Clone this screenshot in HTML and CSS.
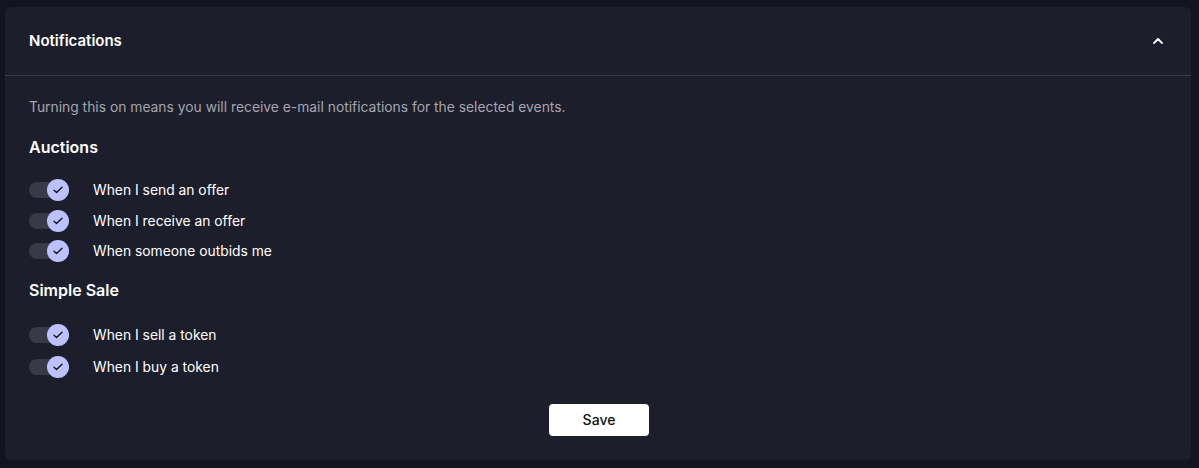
FILE: index.html
```html
<!DOCTYPE html>
<html>
<head>
<meta charset="utf-8">
<link rel="stylesheet" href="styles.css">
</head>
<body>
<section class="card">
  <header class="card-header">
    <h2 class="title">Notifications</h2>
    <svg class="chevron" width="12" height="8" viewBox="0 0 12 8"><path d="M2 6 L6 2 L10 6" fill="none" stroke="#fff" stroke-width="1.8" stroke-linecap="round" stroke-linejoin="round"/></svg>
  </header>
  <div class="card-body">
    <p class="desc">Turning this on means you will receive e-mail notifications for the selected events.</p>
    <h3 class="group-title">Auctions</h3>
    <ul class="list list-auctions">
      <li class="row"><span class="toggle"><span class="thumb"><svg width="12" height="10" viewBox="0 0 12 10"><path d="M2 5.2 L4.6 7.6 L10 2.2" fill="none" stroke="#15161f" stroke-width="1.4" stroke-linecap="round" stroke-linejoin="round"/></svg></span></span><span class="label">When I send an offer</span></li>
      <li class="row"><span class="toggle"><span class="thumb"><svg width="12" height="10" viewBox="0 0 12 10"><path d="M2 5.2 L4.6 7.6 L10 2.2" fill="none" stroke="#15161f" stroke-width="1.4" stroke-linecap="round" stroke-linejoin="round"/></svg></span></span><span class="label">When I receive an offer</span></li>
      <li class="row"><span class="toggle"><span class="thumb"><svg width="12" height="10" viewBox="0 0 12 10"><path d="M2 5.2 L4.6 7.6 L10 2.2" fill="none" stroke="#15161f" stroke-width="1.4" stroke-linecap="round" stroke-linejoin="round"/></svg></span></span><span class="label">When someone outbids me</span></li>
    </ul>
    <h3 class="group-title">Simple Sale</h3>
    <ul class="list list-sale">
      <li class="row"><span class="toggle"><span class="thumb"><svg width="12" height="10" viewBox="0 0 12 10"><path d="M2 5.2 L4.6 7.6 L10 2.2" fill="none" stroke="#15161f" stroke-width="1.4" stroke-linecap="round" stroke-linejoin="round"/></svg></span></span><span class="label">When I sell a token</span></li>
      <li class="row"><span class="toggle"><span class="thumb"><svg width="12" height="10" viewBox="0 0 12 10"><path d="M2 5.2 L4.6 7.6 L10 2.2" fill="none" stroke="#15161f" stroke-width="1.4" stroke-linecap="round" stroke-linejoin="round"/></svg></span></span><span class="label">When I buy a token</span></li>
    </ul>
    <div class="actions"><button class="save">Save</button></div>
  </div>
</section>
</body>
</html>
```
FILE: styles.css
```css
html, body { margin: 0; padding: 0; }
body {
  background: #13141f;
  font-family: Inter, "Noto Sans", sans-serif;
  color: #fff;
  padding: 7px 8px 8px 5px;
  width: 1186px;
}
.card {
  background: #1d1e2b;
  border-radius: 6px;
  height: 453px;
  box-sizing: border-box;
}
.card-header {
  height: 69px;
  box-sizing: border-box;
  padding: 0 27px 2px 24px;
  border-bottom: 1px solid #3a3b47;
  display: flex;
  align-items: center;
  justify-content: space-between;
}
.title {
  margin: 0;
  font-size: 15px;
  font-weight: 600;
}
.chevron { display: block; margin-top: 2px; }
.card-body {
  padding: 21px 24px 0 24px;
}
.desc {
  margin: 0;
  font-size: 13.85px;
  line-height: 20px;
  color: #a3a5b0;
}
.group-title {
  margin: 12px 0 0 0;
  font-size: 16px;
  font-weight: 600;
  line-height: 22px;
}
.desc + .group-title { margin-top: 19px; }
.list {
  list-style: none;
  margin: 0;
  padding: 0;
}
.list-auctions { margin-top: 17px; }
.list-sale { margin-top: 18px; }
.row {
  display: flex;
  align-items: center;
  height: 30.5px;
}
.list-sale .row { height: 32.5px; }
.toggle {
  position: relative;
  width: 40px;
  height: 16px;
  border-radius: 8px;
  background: #393a47;
  display: inline-block;
  flex: none;
}
.thumb {
  position: absolute;
  right: 0;
  top: -3px;
  width: 22px;
  height: 22px;
  border-radius: 50%;
  background: #bcc2ff;
  display: flex;
  align-items: center;
  justify-content: center;
}
.thumb svg { display: block; }
.label {
  margin-left: 24px;
  font-size: 13.85px;
  font-weight: 400;
}
.actions {
  display: flex;
  justify-content: center;
  margin-top: 20px;
}
.save {
  width: 100px;
  height: 32px;
  background: #fff;
  color: #111;
  border: none;
  border-radius: 4px;
  font-family: Inter, "Noto Sans", sans-serif;
  font-size: 14px;
  font-weight: 500;
  margin-left: 2px;
}
```
